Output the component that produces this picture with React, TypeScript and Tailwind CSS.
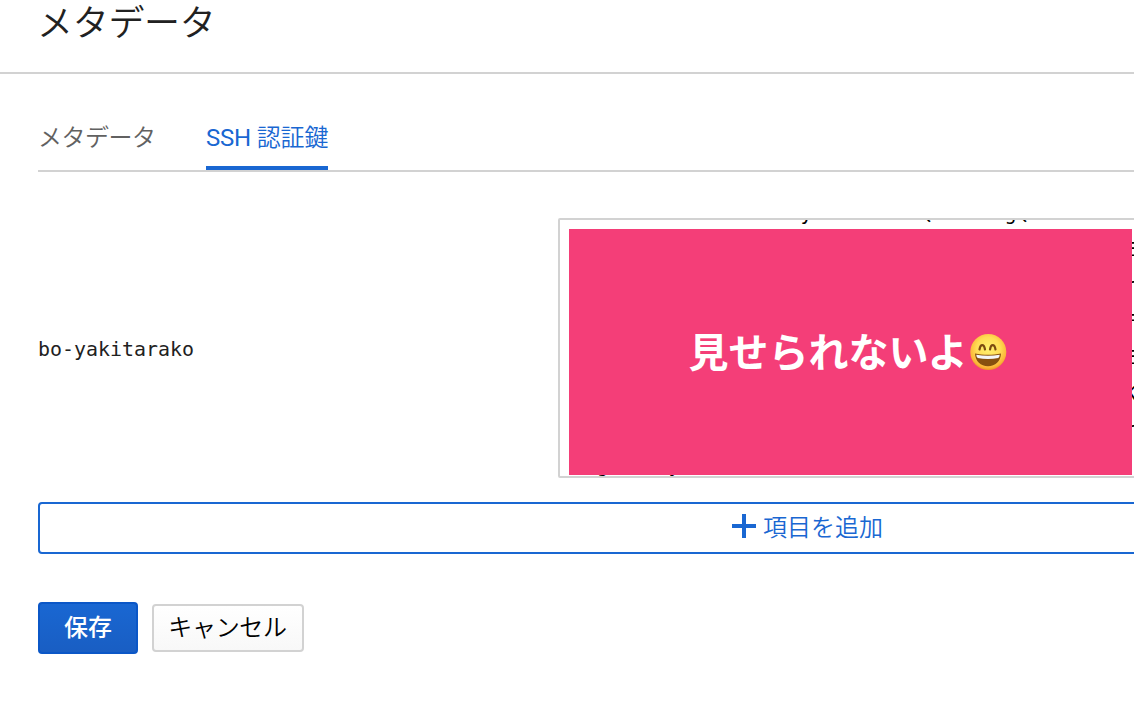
const tabs = [
  { latin: "", label: "メタデータ", active: false },
  { latin: "SSH ", label: "認証鍵", active: true },
];

const KEY_COLUMNS = 47;

const keyLines = [
  "ssh-rsa AAAAB3NzaC1yc2EAAAADAQABAAABgQC     A",
  "E".padStart(KEY_COLUMNS),
  "r".padStart(KEY_COLUMNS),
  "F".padStart(KEY_COLUMNS),
  "E".padStart(KEY_COLUMNS),
  "K".padStart(KEY_COLUMNS),
  "r".padStart(KEY_COLUMNS),
  "  g     y",
];

export default function App() {
  return (
    <div className="h-[708px] w-[1134px] overflow-hidden bg-white font-[Roboto,'Noto_Sans_CJK_JP',sans-serif] text-[#212121]">
      <header className="h-[74px] border-b-2 border-[#d2d2d2] pl-[37px]">
        <h1 className="text-[36px] leading-[48px] font-[350] tracking-[-0.3px]">メタデータ</h1>
      </header>

      <main className="w-[1577px] pl-[38px]">
        <nav className="flex h-[98px] items-end gap-[48px] border-b-2 border-[#d2d2d2]">
          {tabs.map((tab) => (
            <Tab key={tab.label} {...tab} />
          ))}
        </nav>

        <div className="mt-[46px] flex h-[260px] items-center">
          <div className="w-[520px] pt-[4px] font-['DejaVu_Sans_Mono',monospace] text-[19.93px]">
            bo-yakitarako
          </div>
          <KeyField />
        </div>

        <button className="mt-[24px] flex h-[52px] w-full items-center justify-center gap-[7px] rounded-[4px] border-2 border-[#1967d2] text-[24px] font-[350] text-[#1967d2]">
          <svg width="24" height="24" viewBox="0 0 24 24" fill="#1967d2" className="mb-[4px]" aria-hidden="true">
            <path d="M10 0h4v10h10v4H14v10h-4V14H0v-4h10z" />
          </svg>
          <span className="leading-none">項目を追加</span>
        </button>

        <div className="mt-[48px] flex items-center gap-[14px] text-[24px]">
          <button className="h-[52px] w-[100px] rounded-[4px] border-2 border-[#0b57c7] bg-linear-to-b from-[#1967d2] to-[#195ec3] pb-[1px] leading-none font-medium text-white">
            保存
          </button>
          <button className="h-[48px] w-[152px] rounded-[4px] border-2 border-[#d2d2d2] bg-linear-to-b from-white to-[#f8f8f8] pr-[1px] leading-none font-[350] tracking-[-0.3px] text-black">
            キャンセル
          </button>
        </div>
      </main>
    </div>
  );
}

function Tab({ latin, label, active }: { latin: string; label: string; active: boolean }) {
  return (
    <div
      className={
        active
          ? "h-[58px] w-[122px] border-b-4 border-[#1967d2] text-[24px] leading-[52px] font-[350] tracking-[-0.2px] whitespace-nowrap text-[#1967d2]"
          : "h-[58px] w-[120px] text-[24px] leading-[52px] font-[350] tracking-[-0.5px] whitespace-nowrap text-[#616161]"
      }
    >
      {latin && <span className="font-normal">{latin}</span>}
      {label}
    </div>
  );
}

function KeyField() {
  return (
    <div className="relative h-[260px] w-[1020px] overflow-hidden rounded-[2px] border-2 border-[#d2d2d2]">
      <pre className="-mt-[24px] pl-[13px] font-['DejaVu_Sans_Mono',monospace] text-[19.93px] leading-[36px] text-black">
        {keyLines.join("\n")}
      </pre>

      {/* Cover over the key */}
      <div className="absolute top-[9px] left-[9px] flex h-[246px] w-[563px] items-center justify-center bg-[#f43e78] pr-[4px] text-[40px] leading-none font-bold text-white">
        <span className="pt-[3px]">見せられないよ</span>
        <GrinEmoji />
      </div>
    </div>
  );
}

function GrinEmoji() {
  return (
    <svg width="40" height="40" viewBox="0 0 40 40" className="shrink-0" aria-label="😄">
      <defs>
        <radialGradient id="face" cx="0.5" cy="0.42" r="0.6">
          <stop offset="0" stopColor="#fff06e" />
          <stop offset="0.55" stopColor="#ffdc55" />
          <stop offset="0.85" stopColor="#fbb638" />
          <stop offset="1" stopColor="#e98a20" />
        </radialGradient>
      </defs>
      <circle cx="20.3" cy="20" r="18" fill="url(#face)" />
      <path
        d="M11.5 17.5c.5-3 1.4-4.400 2.700-4.400s2.300 1.400 2.800 4.400M22 17.500c.5-3 1.400-4.400 2.700-4.400s2.300 1.400 2.800 4.400"
        fill="none"
        stroke="#7c4a10"
        strokeWidth="2.2"
        strokeLinecap="round"
      />
      <path d="M7 21.5c8 1.700 18 1.700 26 0-.3 8-5.700 12.700-13 12.700S7.300 29.500 7 21.500z" fill="#87500f" />
      <path d="M8.300 22.800c7.500 1.400 15.900 1.400 23.400 0-.1 1.500-.5 2.500-1.400 3.200-6.600 1.200-14 1.200-20.600 0-.9-.7-1.300-1.700-1.400-3.200z" fill="#f4f6f8" />
    </svg>
  );
}
